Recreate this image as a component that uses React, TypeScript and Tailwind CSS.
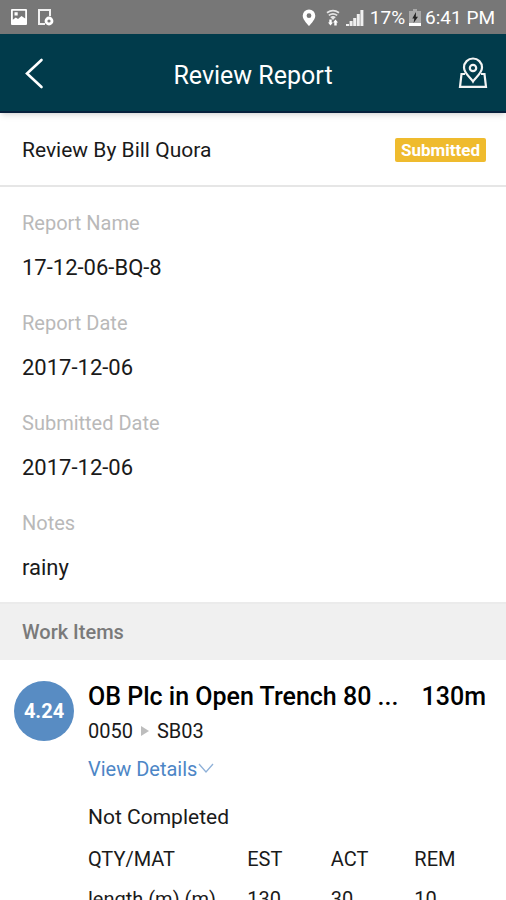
import React, { useState } from 'react';

interface ReportField {
    label: string;
    value: string;
}

interface Material {
    name: string;
    est: number;
    act: number;
    rem: number;
}

const fields: ReportField[] = [
    { label: 'Report Name', value: '17-12-06-BQ-8' },
    { label: 'Report Date', value: '2017-12-06' },
    { label: 'Submitted Date', value: '2017-12-06' },
    { label: 'Notes', value: 'rainy' },
];

const materials: Material[] = [{ name: 'length (m) (m)', est: 130, act: 30, rem: 10 }];

const StatusBar: React.FC = () => (
    <div className="flex h-[34px] shrink-0 items-center justify-between bg-[#777777] pl-[10px] pr-[11px] text-white">
        <div className="flex items-center gap-2">
            <svg width="18" height="18" viewBox="0 0 18 18" aria-hidden="true">
                <path
                    fill="#fff"
                    fillRule="evenodd"
                    d="M2 1h14a1 1 0 0 1 1 1v14a1 1 0 0 1-1 1H2a1 1 0 0 1-1-1V2a1 1 0 0 1 1-1Zm.8 1.800v9l3-2.300 2.200 1.500 3.500-3 3.700 2.500V2.800Zm1.700 1.400h3.200v3.200H4.500Z"
                />
            </svg>
            <svg width="18" height="18" viewBox="0 0 18 18" fill="none" aria-hidden="true">
                <path d="M14 8V2H3v14h6" stroke="#f0f0f0" strokeWidth="2" />
                <circle cx="13" cy="13" r="3" stroke="#fff" strokeWidth="2.800" />
            </svg>
        </div>
        <div className="flex items-center pt-0.5">
            <svg width="14" height="18" viewBox="0 0 14 18" className="mr-[10px]" aria-hidden="true">
                <path
                    fill="#fff"
                    fillRule="evenodd"
                    d="M7 .5a6.300 6.300 0 0 0-6.300 6.300c0 4.300 6.300 10.200 6.300 10.200s6.300-5.900 6.300-10.200A6.300 6.300 0 0 0 7 .5Zm0 3.800a2.400 2.400 0 1 1 0 4.800 2.400 2.400 0 0 1 0-4.800Z"
                />
            </svg>
            <svg width="14" height="18" viewBox="0 0 14 18" className="mr-1.5" fill="none" aria-hidden="true">
                <path d="M1 3.800Q7-.5 13 3.800M2.800 6.400Q7 3.300 11.200 6.400M4.800 8.800Q7 7.200 9.200 8.800" stroke="#e4e4e4" strokeWidth="1.800" />
                <path d="M7 7.500v3" stroke="#e4e4e4" strokeWidth="2" />
                <path d="M3.300 10.500h2.400v3h1.300l-2.500 3-2.500-3h1.300ZM8.300 16.500h2.400v-3H12l-2.500-3-2.500 3h1.300Z" fill="#fff" />
            </svg>
            <svg width="18" height="18" viewBox="0 0 18 18" className="mr-1.5" fill="#f0f0f0" aria-hidden="true">
                <path d="M0 15h3v2H0ZM3.600 12h3v5h-3ZM7.200 9h3v8h-3ZM10.800 5h3v12h-3ZM14.400 1h3v16h-3Z" />
            </svg>
            <span className="text-[19px] leading-6">17%</span>
            <svg width="12" height="18" viewBox="0 0 12 18" className="mx-1" aria-hidden="true">
                <path d="M4 0h4v2h4v12H0V2h4Z" fill="#a9a9a9" />
                <path d="M0 14h12v3H0Z" fill="#fff" />
                <path d="M7 3 3.300 9.500h2L4.600 14 9 7.800H6.800Z" fill="#222" />
            </svg>
            <span className="text-[19px] leading-6">6:41 PM</span>
        </div>
    </div>
);

const Header: React.FC = () => (
    <header className="z-10 flex h-[79px] shrink-0 items-center justify-between border-b-2 border-[#06203c] bg-[#013b4b] px-4 text-white shadow-md">
        <button type="button" aria-label="Back" className="w-8 pl-1.5">
            <svg width="24" height="32" viewBox="0 0 24 32" fill="none" stroke="#fff" strokeWidth="2.600" strokeLinecap="round">
                <path d="M19.500 3 5 16.500 19.500 30" />
            </svg>
        </button>
        <h1 className="pt-1.5 text-[25px] leading-8">Review Report</h1>
        <button type="button" aria-label="Map" className="w-8">
            <svg width="32" height="32" viewBox="0 0 32 32" fill="none" stroke="#f4f4f4" strokeWidth="2.200">
                <path d="M15 24.500c-2-3.500-9-8-9-14a9 9 0 0 1 18 0c0 6-7 10.500-9 14Z" />
                <circle cx="15" cy="11" r="3.200" />
                <path d="M7 17H3.500L2 29.800h26L26.500 17H23" />
            </svg>
        </button>
    </header>
);

const WorkItem: React.FC = () => {
    const [open, setOpen] = useState(true);

    return (
        <article className="flex gap-[14px] pl-[14px] pr-5 pt-[21px]">
            <div className="flex size-[60px] shrink-0 items-center justify-center rounded-full bg-[#588cc3] text-[20px] font-bold text-white">
                4.24
            </div>
            <div className="min-w-0 flex-1">
                <div className="flex items-center justify-between gap-4 text-[25px] font-medium leading-8 text-black">
                    <h3 className="truncate">OB Plc in Open Trench 80 ...</h3>
                    <span>130m</span>
                </div>
                <div className="flex items-center gap-2 pt-1 text-[20px] leading-7">
                    <span>0050</span>
                    <svg width="8" height="10" viewBox="0 0 8 10" fill="#bdbdbd" aria-hidden="true">
                        <path d="M0 0l8 5-8 5Z" />
                    </svg>
                    <span>SB03</span>
                </div>
                <button
                    type="button"
                    onClick={() => setOpen(!open)}
                    className="mt-[10px] flex items-center text-[20px] leading-7 text-[#4d86c6]"
                >
                    View Details
                    <svg width="18" height="12" viewBox="0 0 18 12" fill="none" stroke="#8fb1d8" strokeWidth="1.300" aria-hidden="true">
                        <path d="M2 1l7 8 7-8" />
                    </svg>
                </button>
                {open && (
                    <>
                        <p className="mt-5 text-[21px] leading-7">Not Completed</p>
                        <table className="mt-2 w-full table-fixed text-left text-[20px]">
                            <thead>
                                <tr className="h-10">
                                    <th className="w-[40%] font-normal">QTY/MAT</th>
                                    <th className="w-[21%] font-normal">EST</th>
                                    <th className="w-[21%] font-normal">ACT</th>
                                    <th className="font-normal">REM</th>
                                </tr>
                            </thead>
                            <tbody>
                                {materials.map((m) => (
                                    <tr key={m.name} className="h-10">
                                        <td>{m.name}</td>
                                        <td>{m.est}</td>
                                        <td>{m.act}</td>
                                        <td>{m.rem}</td>
                                    </tr>
                                ))}
                            </tbody>
                        </table>
                    </>
                )}
            </div>
        </article>
    );
};

export default function App() {
    return (
        <div className="flex h-screen flex-col overflow-hidden bg-white font-['Roboto',sans-serif] text-[#1a1a1a]">
            <StatusBar />
            <Header />
            <main className="min-h-0 flex-1 overflow-y-auto [scrollbar-width:none]">
                <div className="flex h-[74px] items-center justify-between border-b-2 border-[#e6e6e6] pl-[22px] pr-5 pt-0.5">
                    <h2 className="text-[21px] leading-7">Review By Bill Quora</h2>
                    <span className="rounded-xs bg-[#efbb2e] px-[6px] text-[17px] font-bold leading-6 text-white">Submitted</span>
                </div>

                <dl className="flex flex-col gap-[26px] px-[22px] pb-[17px] pt-6">
                    {fields.map((field) => (
                        <div key={field.label} className="flex flex-col gap-4">
                            <dt className="text-[20px] leading-6 text-[#b9b9b9]">{field.label}</dt>
                            <dd className="text-[22px] leading-[34px]">{field.value}</dd>
                        </div>
                    ))}
                </dl>

                <h2 className="border-t-2 border-[#ebebeb] bg-[#f0f0f0] px-[22px] py-[14px] text-[20px] font-medium leading-7 text-[#7a7a7a]">
                    Work Items
                </h2>
                <WorkItem />
            </main>
        </div>
    );
}
